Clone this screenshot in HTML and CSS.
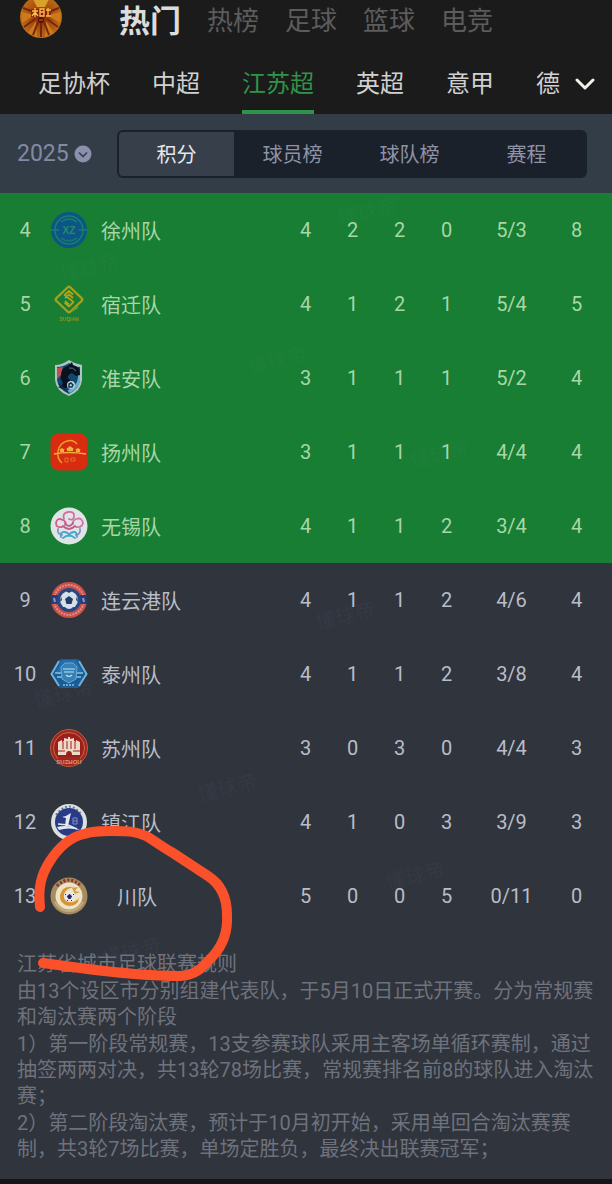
FILE: index.html
```html
<!DOCTYPE html>
<html lang="zh-CN">
  <head>
    <meta charset="UTF-8" />
    <meta name="viewport" content="width=device-width, initial-scale=1.0" />
    <title>江苏超 积分</title>
    <link rel="stylesheet" href="styles.css">
  </head>
  <body>
    <header class="header">
      <div class="top-bar">
        <a href="#" class="avatar" aria-label="我的">
          <svg width="42" height="38" viewBox="0 4 42 38">
            <defs>
              <radialGradient id="flame">
                <stop offset="0" stop-color="#7a1c08" />
                <stop offset="0.45" stop-color="#a8480e" />
                <stop offset="1" stop-color="#b96a16" />
              </radialGradient>
            </defs>
            <circle cx="21" cy="21" r="21" fill="url(#flame)" />
            <path d="M12 1h18l-5 10h-8z" fill="#d9a02a" />
            <path d="M1 16l14 3-13 8zM41 16l-14 3 13 8zM8 37l8-12 1 16zM34 37l-8-12-1 16z" fill="#cc7a1a" />
            <path d="M3 12l11 4M39 12l-11 4M4 31l11-8M38 31l-11-8M21 26v15M13 39l5-13M29 39l-5-13" stroke="#70280c" stroke-width="2" />
            <path d="M11 13h20v8H11z" fill="#8c1f0a" />
            <path d="M12 15h6M15 12v9M12 20l3-4 3 4M20 13h4v7h-4zM20 16h4M26 14h5M28 12v8M26 20h5" fill="none" stroke="#f5c24b" stroke-width="1.3" />
            <circle cx="21" cy="24" r="3" fill="#4d1208" />
            <path d="M19 24h4" stroke="#dd5b1b" />
          </svg>
        </a>
        <nav class="top-nav">
          <a href="#" class="active">热门</a>
          <a href="#">热榜</a>
          <a href="#">足球</a>
          <a href="#">篮球</a>
          <a href="#">电竞</a>
        </nav>
      </div>
      <div class="league-bar">
        <nav class="league-nav">
          <a href="#">足协杯</a>
          <a href="#">中超</a>
          <a href="#" class="active">江苏超</a>
          <a href="#">英超</a>
          <a href="#">意甲</a>
          <a href="#">德</a>
        </nav>
        <button type="button" class="more-btn" aria-label="更多联赛">
          <svg width="20" height="14" viewBox="0 0 20 14">
            <path d="M2 3l8 8 8-8" fill="none" stroke="#f4f0ea" stroke-width="3" stroke-linecap="round" stroke-linejoin="round" />
          </svg>
        </button>
      </div>
    </header>

    <div class="filter-bar">
      <label class="season">
        <select aria-label="赛季">
          <option>2025</option>
        </select>
        <svg width="18" height="18" viewBox="0 0 18 18">
          <circle cx="9" cy="9" r="8.5" fill="#8c90ac" />
          <path d="M5 7.5l4 4 4-4" fill="none" stroke="#36404b" stroke-width="1.6" />
        </svg>
      </label>
      <div class="segments">
        <button type="button" class="active">积分</button>
        <button type="button">球员榜</button>
        <button type="button">球队榜</button>
        <button type="button">赛程</button>
      </div>
    </div>

    <main class="board">
      <table class="standings">
        <colgroup>
          <col class="col-rank">
          <col>
          <col class="col-num">
          <col class="col-num">
          <col class="col-num">
          <col class="col-num">
          <col class="col-goals">
          <col class="col-points">
        </colgroup>
        <tbody class="qualified">
          <tr>
            <td>4</td>
            <th scope="row"><div class="team">
              <svg class="logo" viewBox="0 0 38 38">
                <circle cx="19" cy="19" r="18" fill="#0d5585" />
                <circle cx="19" cy="19" r="14" fill="none" stroke="#197d70" stroke-width="1.5" />
                <path d="M1 19h8M29 19h8M11 11q8-6 16 0M11 27q8 6 16 0" fill="none" stroke="#16806a" stroke-width="1.5" />
                <path d="M9 13h20v12H9z" fill="#0d5585" />
                <text x="19" y="23" class="mark" font-size="10" fill="#25896f">XZ</text>
                <path d="M13 29h12" stroke="#12746f" stroke-dasharray="2 1" />
              </svg>
              徐州队</div></th>
            <td>4</td><td>2</td><td>2</td><td>0</td><td>5/3</td><td>8</td>
          </tr>
          <tr>
            <td>5</td>
            <th scope="row"><div class="team">
              <svg class="logo" viewBox="0 0 38 38">
                <path d="M17.500 2.500q1.500-1.500 3 0l11 10.500q1.500 1.500 0 3l-11 10.500q-1.500 1.500-3 0L6.500 16q-1.500-1.500 0-3z" fill="none" stroke="#a6a01c" stroke-width="2.400" />
                <path d="M23 9.500l-4-3.500-4.500 4 9 7-4.500 4.500-4.500-4M15 13l4-3.500 4 3.500M15 16l4 3.500" fill="none" stroke="#b1a21d" stroke-width="1.800" stroke-linejoin="round" />
                <path d="M22 26l6-4" stroke="#6f9a35" stroke-width="2" />
                <text x="19" y="36" class="mark" font-size="5" fill="#8a9520">SUQIAN</text>
              </svg>
              宿迁队</div></th>
            <td>4</td><td>1</td><td>2</td><td>1</td><td>5/4</td><td>5</td>
          </tr>
          <tr>
            <td>6</td>
            <th scope="row"><div class="team">
              <svg class="logo" viewBox="0 0 38 38">
                <path d="M5 6q7 0 14-5 6 4 13 5v15q-1 11-13 16Q6 32 5 21z" fill="#b0c4c4" />
                <path d="M7 8q6 0 12-4 5 4 11 4v13q-1 9-11 14Q8 30 7 21z" fill="#17466b" />
                <path d="M7 9l6-1-2 8-4 4z" fill="#c05050" />
                <path d="M28 12l2-1v11q-2 8-10 12l-3-2q10-5 11-13z" fill="#65b2d2" />
                <path d="M11 17q0-9 7-10l4-4 1 3q8 2 7 10l-4 1-4-3q-5 2-4 5 5 4 1 8-5 5-11 1 7-2 4-6-2-2-1-5z" fill="#071321" />
                <path d="M19 9q4-1 7 3" fill="none" stroke="#5c7484" />
                <circle cx="21" cy="26" r="4" fill="#b9d4dc" />
                <path d="M21 24l2 2-1 2h-3v-3zM9 25q5 5 9 8" fill="none" stroke="#133147" stroke-width="1.500" />
              </svg>
              淮安队</div></th>
            <td>3</td><td>1</td><td>1</td><td>1</td><td>5/2</td><td>4</td>
          </tr>
          <tr>
            <td>7</td>
            <th scope="row"><div class="team">
              <svg class="logo" viewBox="0 0 38 38">
                <rect x="0.500" y="0.500" width="37" height="37" rx="8" fill="#d92b10" />
                <path d="M12 30a13 13 0 0 1 5-22q6-2 10 3" fill="none" stroke="#e8a52a" stroke-width="1.400" />
                <path d="M4 21q15-3 32 0" fill="none" stroke="#f0b13a" stroke-width="1.500" />
                <path d="M9 17l3-2 3 2zM16 16l4-3 4 3zM25 17l3-2 3 2zM10 17h4v2h-4zM17 16h6v2h-6zM26 17h4v2h-4z" fill="#f0b13a" />
                <path d="M15 25h3v4h-3zM21 25h4v3h-4z" fill="none" stroke="#df7426" />
              </svg>
              扬州队</div></th>
            <td>3</td><td>1</td><td>1</td><td>1</td><td>4/4</td><td>4</td>
          </tr>
          <tr>
            <td>8</td>
            <th scope="row"><div class="team">
              <svg class="logo" viewBox="0 0 38 38">
                <circle cx="19" cy="19" r="18.500" fill="#dfe4e6" />
                <g fill="none" stroke-width="1.800" stroke-linecap="round">
                  <path d="M14 12q-2-6 4-7 7-1 6 5-1 4-5 2" stroke="#cf6fa0" />
                  <path d="M12 20q-6 1-6-4 1-6 7-3 4 2 2 5" stroke="#d45e86" />
                  <path d="M26 20q6 1 7-4-1-6-7-4-4 2-3 5" stroke="#cf79a4" />
                  <path d="M15 16q4 6 8 0M13 19q6 6 12 0" stroke="#c75a8c" />
                  <path d="M8 22q-1 5 4 6M30 22q1 5-4 6" stroke="#8b90c0" />
                  <path d="M11 30q-1-5 3-5t5 3q2-3 5-3t3 5M13 31q6-5 12 0" stroke="#45a8cc" />
                </g>
              </svg>
              无锡队</div></th>
            <td>4</td><td>1</td><td>1</td><td>2</td><td>3/4</td><td>4</td>
          </tr>
        </tbody>
        <tbody>
          <tr>
            <td>9</td>
            <th scope="row"><div class="team">
              <svg class="logo" viewBox="0 0 38 38">
                <circle cx="19" cy="19" r="18" fill="#c94f49" />
                <circle cx="19" cy="19" r="15" fill="none" stroke="#dc8f88" stroke-width="2" stroke-dasharray="2 1" />
                <path d="M1 14h36v9H1z" fill="#263c79" />
                <path d="M4 17l1 4M33 17l1 4" stroke="#8f9cc0" stroke-width="2" />
                <circle cx="19" cy="19" r="12" fill="#264781" />
                <circle cx="19" cy="19" r="9" fill="#d7dfe7" />
                <path d="M19 15l4 3-1.500 5h-5L15 18z" fill="#243c68" />
                <path d="M16 10l3 2 3-2zM27 15l-1 4 2 2zM11 15l1 4-2 2zM23 26l-2 2 4-1zM15 26l2 2-4-1z" fill="#243c68" />
              </svg>
              连云港队</div></th>
            <td>4</td><td>1</td><td>1</td><td>2</td><td>4/6</td><td>4</td>
          </tr>
          <tr>
            <td>10</td>
            <th scope="row"><div class="team">
              <svg class="logo" viewBox="0 0 38 38">
                <path d="M10 4h18l9 15-9 14H10L1 19z" fill="#1a5c96" />
                <path d="M9 6L1.500 19 9 31M29 6l7.500 13L29 31" fill="none" stroke="#6fb2dc" stroke-width="2" />
                <path d="M12 5h14l6 12H6z" fill="#246eae" />
                <path d="M5 18h28M7 22h24" stroke="#8cc4e2" stroke-width="1.400" />
                <path d="M11 12l4-4h8l4 4-1 12-7 4-7-4z" fill="#3680b8" stroke="#6aa9d2" />
                <path d="M13 14h12M14 17h10M16 20q3 3 6 0" fill="none" stroke="#c0dfed" stroke-width="1.200" />
                <path d="M13 30h12" stroke="#68a9cf" stroke-width="2" stroke-dasharray="2 1" />
              </svg>
              泰州队</div></th>
            <td>4</td><td>1</td><td>1</td><td>2</td><td>3/8</td><td>4</td>
          </tr>
          <tr>
            <td>11</td>
            <th scope="row"><div class="team">
              <svg class="logo" viewBox="0 0 38 38">
                <circle cx="19" cy="19" r="18.500" fill="#9e281f" stroke="#c65639" />
                <circle cx="19" cy="19" r="15.500" fill="#9b1f1a" stroke="#c56a4c" />
                <path d="M8 13l4-2v2l2-1V9l4 1V8h2v2l4-1v3l2 1v-2l4 2v7H8z" fill="#eed8c8" />
                <path d="M13 13v8M17 12v8M21 12v8M25 13v8" stroke="#9b1f1a" />
                <path d="M8 20h22v6h-8q0-4-3-4t-3 4H8z" fill="#eed8c8" />
                <path d="M8 22h7M23 22h7" stroke="#9b1f1a" />
                <path d="M8 28h22v6H8z" fill="#9e281f" />
                <text x="19" y="35" class="mark" font-size="6" fill="#d99a76">SUZHOU</text>
              </svg>
              苏州队</div></th>
            <td>3</td><td>0</td><td>3</td><td>0</td><td>4/4</td><td>3</td>
          </tr>
          <tr>
            <td>12</td>
            <th scope="row"><div class="team">
              <svg class="logo" viewBox="0 0 38 38">
                <circle cx="19" cy="19" r="18" fill="#dbe2dd" />
                <path d="M6 12q13-17 26 0" fill="none" stroke="#6c7897" stroke-width="2" stroke-dasharray="2 2" />
                <circle cx="19" cy="19" r="14" fill="#293b88" />
                <path d="M12 14q5-1 9-4l-3 13h-3l1-8zM7 24q12-3 23 3-12-3-21 0z" fill="#e5e9ee" />
                <path d="M8 21l10 1 9 4" fill="none" stroke="#e5e9ee" stroke-width="1.500" />
                <path d="M23 15h4v6h-4zM23 18h4" fill="none" stroke="#8290bc" />
              </svg>
              镇江队</div></th>
            <td>4</td><td>1</td><td>0</td><td>3</td><td>3/9</td><td>3</td>
          </tr>
          <tr>
            <td>13</td>
            <th scope="row"><div class="team team-short">
              <svg class="logo" viewBox="0 0 38 38">
                <circle cx="19" cy="19" r="18.500" fill="#a88b5e" />
                <path d="M7 9q12-12 24 0" fill="none" stroke="#8a3528" stroke-width="3" stroke-dasharray="2 2" />
                <path d="M5 25q5 9 14 9t14-9" fill="none" stroke="#c0ad7d" stroke-width="2" />
                <circle cx="19" cy="19" r="13.500" fill="#eee2c9" />
                <path d="M25 10q-13-2-15 8-1 9 9 11 9 0 10-8-4 5-10 4-6-2-5-8 2-6 11-7z" fill="#d9962f" />
                <path d="M22 11l6-1-3 4 5 1-5 2z" fill="#d8a044" />
                <circle cx="19.500" cy="19.500" r="5.500" fill="#e8e6e9" />
                <path d="M19.500 17.500l2 1.500-1 2.500h-2l-1-2.500zM15 17l1 1M24 17l-1 1M17 24l1-1M22 24l-1-1" fill="#27294f" stroke="#27294f" />
              </svg>
              川队</div></th>
            <td>5</td><td>0</td><td>0</td><td>5</td><td>0/11</td><td>0</td>
          </tr>
        </tbody>
      </table>

      <section class="rules">
        <p>江苏省城市足球联赛规则</p>
        <p>由13个设区市分别组建代表队，于5月10日正式开赛。分为常规赛和淘汰赛两个阶段</p>
        <p>1）第一阶段常规赛，13支参赛球队采用主客场单循环赛制，通过抽签两两对决，共13轮78场比赛，常规赛排名前8的球队进入淘汰赛；</p>
        <p>2）第二阶段淘汰赛，预计于10月初开始，采用单回合淘汰赛赛制，共3轮7场比赛，单场定胜负，最终决出联赛冠军；</p>
      </section>

      <!-- watermarks and the hand-drawn circle, over the table -->
      <svg class="overlay" width="612" height="987" viewBox="0 193 612 987" aria-hidden="true">
        <g class="watermark">
          <text transform="translate(62 282) rotate(-14)">懂球帝</text>
          <text transform="translate(340 226) rotate(-14)">懂球帝</text>
          <text transform="translate(250 375) rotate(-14)">懂球帝</text>
          <text transform="translate(412 468) rotate(-14)">懂球帝</text>
          <text transform="translate(318 630) rotate(-14)">懂球帝</text>
          <text transform="translate(36 708) rotate(-14)">懂球帝</text>
          <text transform="translate(200 802) rotate(-14)">懂球帝</text>
          <text transform="translate(388 890) rotate(-14)">懂球帝</text>
          <text transform="translate(104 966) rotate(-14)">懂球帝</text>
        </g>
        <path class="scribble" d="M40 907C38 887 41 875 50 861C59 847 71 837 84 834C92 831 100 831 112 831C127 831 135 831 146 836C152 839 162 847 173 853L208 876C222 885 227 899 227 915C228 932 223 945 213 956C202 968 195 976 180 976C150 976 110 972 80 968L43 963" />
      </svg>
    </main>
  </body>
</html>
```
FILE: styles.css
```css
* {
  box-sizing: border-box;
}
body {
  margin: 0;
  background: #151419;
  color: #b9bdc7;
  font-family: Roboto, "Noto Sans CJK SC", sans-serif;
  font-size: 20px;
}
a {
  color: inherit;
  text-decoration: none;
}
button,
select {
  padding: 0;
  border: none;
  background: none;
  color: inherit;
  font: inherit;
  cursor: pointer;
}
svg {
  display: block;
}

/* header */
.header {
  background: #1b1b1b;
}
.top-bar {
  display: flex;
  height: 54px;
  padding: 0 20px 18px;
  gap: 57px;
}
.avatar {
  width: 42px;
}
.top-nav {
  display: flex;
  align-items: center;
  gap: 26px;
  color: #5c5c5c;
  font-size: 26px;
  white-space: nowrap;
}
.top-nav .active {
  color: #dcdcdc;
  font-size: 31px;
  font-weight: bold;
}
.league-bar {
  display: flex;
  height: 60px;
  padding: 0 17px 0 38px;
}
.league-nav {
  display: flex;
  flex: 1;
  gap: 42px;
  color: #d0d0d0;
  font-size: 24px;
  line-height: 60px;
  white-space: nowrap;
}
.league-nav .active {
  box-shadow: inset 0 -4px #2f9447;
  color: #2f9447;
}

/* season + tabs */
.filter-bar {
  display: flex;
  align-items: center;
  height: 79px;
  padding: 0 25px 0 17px;
  gap: 25px;
  background: #333d47;
}
.season {
  display: flex;
  align-items: center;
  gap: 5px;
  color: #8589a2;
  font-size: 23px;
}
.season select {
  appearance: none;
}
.segments {
  display: grid;
  flex: 1;
  grid-template-columns: 115px repeat(3, 1fr);
  height: 48px;
  padding: 2px;
  border-radius: 6px;
  background: #1b212a;
  color: #8f92a6;
}
.segments .active {
  border-radius: 4px 0 0 4px;
  background: #363f4a;
  color: #e6e8ec;
}

/* standings */
.board {
  position: relative;
  padding-bottom: 16px;
  background: #30343d;
}
.standings {
  width: 100%;
  table-layout: fixed;
  border-collapse: collapse;
  text-align: center;
}
.standings tr {
  height: 74px;
}
.standings td,
.standings th {
  padding: 0;
  font-weight: normal;
}
.col-rank {
  width: 50px;
}
.col-num {
  width: 47px;
}
.col-goals {
  width: 83px;
}
.col-points {
  width: 59px;
}
.standings td:last-child {
  padding-right: 12px;
}
.qualified {
  background: #177e33;
  color: #a9d6a7;
}
.team {
  display: flex;
  align-items: center;
  gap: 13px;
}
.team-short {
  gap: 29px;
}
.logo {
  width: 38px;
  height: 38px;
}
.mark {
  font-family: "Liberation Sans", sans-serif;
  font-weight: bold;
  text-anchor: middle;
}

.rules {
  padding: 18px 17px 0;
  color: #6e727c;
  line-height: 26px;
}
.rules p {
  margin: 0 0 1px;
}

.overlay {
  position: absolute;
  top: 0;
  left: 0;
  pointer-events: none;
}
.watermark {
  fill: #8a93a0;
  fill-opacity: 0.08;
  font-size: 20px;
}
.scribble {
  fill: none;
  stroke: #fb512b;
  stroke-width: 10;
  stroke-linecap: round;
  stroke-linejoin: round;
}
```
